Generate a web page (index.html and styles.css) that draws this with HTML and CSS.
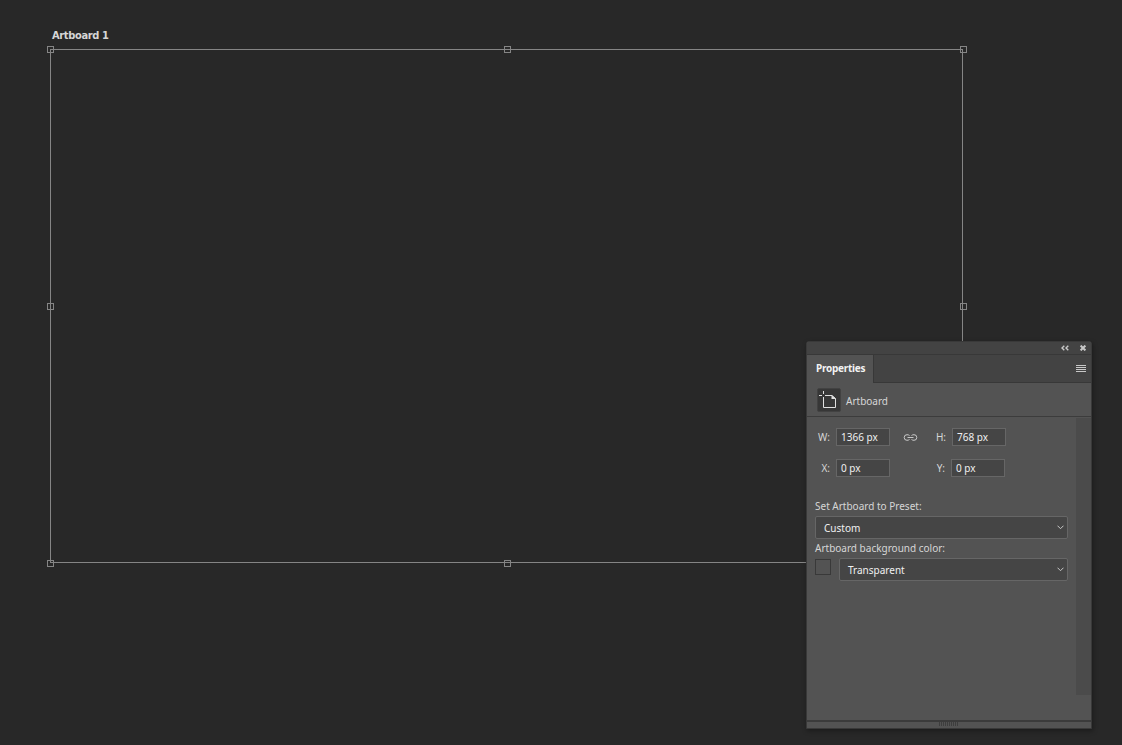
FILE: index.html
```
<!DOCTYPE html>
<html lang="en">
<head>
  <meta charset="utf-8">
  <title>Artboard</title>
  <link rel="stylesheet" href="styles.css">
</head>
<body>
<div class="artboard">
  <div class="artboard-name">Artboard 1</div>
  <span class="handle top left"></span>
  <span class="handle top center"></span>
  <span class="handle top right"></span>
  <span class="handle middle left"></span>
  <span class="handle middle right"></span>
  <span class="handle bottom left"></span>
  <span class="handle bottom center"></span>
</div>

<div class="panel">
  <div class="titlebar">
    <svg class="collapse" width="8" height="6" viewBox="0 0 8 6"><path d="M3.3 .7L1 3l2.3 2.3M7.3 .7L5 3l2.3 2.3"/></svg>
    <svg class="close" width="6" height="6" viewBox="0 0 6 6"><path d="M.6 .6l4.8 4.8M5.4 .6L.6 5.4"/></svg>
  </div>
  <div class="tabs">
    <div class="tab">Properties</div>
    <svg class="menu" width="10" height="7" viewBox="0 0 10 7"><path d="M0 .5h10M0 2.5h10M0 4.5h10M0 6.5h10"/></svg>
  </div>
  <div class="heading">
    <div class="tool">
      <svg width="22" height="22" viewBox="0 0 22 22">
        <path d="M5.500 2v3M1 6.500h3M5.500 8v10.500h12v-9l-3.500 -3H7"/>
        <path class="fold" d="M13.500 6v4h4.500z"/>
      </svg>
    </div>
    <span class="heading-text">Artboard</span>
  </div>
  <div class="content">
    <div class="form">
      <div class="row">
        <label>W:</label><div class="field">1366 px</div>
        <svg class="link" width="15" height="7" viewBox="0 0 15 7"><path d="M6.500 1.500Q5.500 .7 4 .7A2.800 2.800 0 0 0 4 6.300Q5.500 6.300 6.500 5.500M8.500 1.500Q9.500 .7 11 .7A2.800 2.800 0 0 1 11 6.300Q9.500 6.300 8.500 5.500M4.500 3.500h6"/></svg>
        <label class="second">H:</label><div class="field">768 px</div>
      </div>
      <div class="row position">
        <label>X:</label><div class="field">0 px</div>
        <span class="link"></span>
        <label class="second">Y:</label><div class="field">0 px</div>
      </div>
      <div class="caption preset">Set Artboard to Preset:</div>
      <div class="select">
        <span class="custom">Custom</span>
        <svg width="7" height="5" viewBox="0 0 7 5"><path d="M.5 .7l3 3l3 -3"/></svg>
      </div>
      <div class="caption background">Artboard background color:</div>
      <div class="color-row">
        <span class="swatch"></span>
        <div class="select">
          <span class="transparent">Transparent</span>
          <svg width="7" height="5" viewBox="0 0 7 5"><path d="M.5 .7l3 3l3 -3"/></svg>
        </div>
      </div>
    </div>
    <div class="scrollbar"></div>
  </div>
  <div class="resize"><span class="grip"></span></div>
</div>
</body>
</html>
```
FILE: styles.css
```
* { box-sizing: border-box; }
body {
    margin: 0;
    height: 745px;
    overflow: hidden;
    background: #282828;
    color: #d6d6d6;
    font: 10px/14px "Noto Sans", "Open Sans", sans-serif;
}
svg {
    display: block;
    flex: none;
    fill: none;
    stroke: #c8c8c8;
}

/* artboard on the canvas */
.artboard {
    position: absolute;
    left: 50px;
    top: 49px;
    width: 913px;
    height: 514px;
    border: 1px solid #858585;
}
.artboard-name {
    position: absolute;
    left: 1px;
    top: -21px;
    white-space: nowrap;
    font: bold 11px/14px "DejaVu Sans Condensed", "DejaVu Sans", sans-serif;
    letter-spacing: -.35px;
}
.handle {
    position: absolute;
    width: 7px;
    height: 7px;
    border: 1px solid #858585;
}
.top { top: -4px; }
.middle { top: 253px; }
.bottom { top: 510px; }
.left { left: -4px; }
.center { left: 453px; }
.right { left: 909px; }

/* floating panel */
.panel {
    position: absolute;
    left: 806px;
    top: 341px;
    width: 286px;
    height: 388px;
    display: flex;
    flex-direction: column;
    border: 1px solid #393939;
    border-radius: 3px 3px 0 0;
    background: #535353;
    box-shadow: 1px 2px 5px rgba(0,0,0,.35);
}
.titlebar {
    display: flex;
    align-items: center;
    justify-content: flex-end;
    gap: 11px;
    height: 13px;
    padding-right: 5px;
    background: #434343;
    border-bottom: 1px solid #383838;
}
.collapse { stroke-width: 1.400; }
.close { stroke-width: 2; }
.tabs {
    display: flex;
    justify-content: space-between;
    height: 28px;
    padding-right: 5px;
    background: linear-gradient(#383838, #383838) bottom / 100% 1px no-repeat #434343;
}
.tab {
    width: 67px;
    padding: 6px 0 0 9px;
    background: #535353;
    border-right: 1px solid #383838;
    color: #f2f2f2;
    font-weight: bold;
    letter-spacing: -.25px;
}
.menu { margin-top: 10px; }
.heading {
    display: flex;
    height: 34px;
    padding: 5px 0 0 10px;
    border-bottom: 1px solid #3c3c3c;
}
.tool {
    width: 24px;
    height: 24px;
    border: 1px solid #424242;
    border-radius: 2px;
    background: #373737;
}
.tool svg { stroke: #e0e0e0; }
.tool .fold { fill: #e0e0e0; stroke: none; }
.heading-text { margin: 6px 0 0 5px; }
.content {
    display: flex;
    justify-content: space-between;
    height: 303px;
}
.form {
    width: 262px;
    padding: 11px 0 0 8px;
}
.scrollbar {
    width: 15px;
    height: 277px;
    margin-top: 1px;
    background: #4b4b4b;
}
.row {
    display: flex;
    align-items: center;
    height: 18px;
}
.row label {
    width: 15px;
    margin-right: 6px;
    text-align: right;
}
.field {
    width: 54px;
    height: 18px;
    padding: 1px 0 0 4px;
    border: 1px solid #666;
    background: #454545;
    color: #f0f0f0;
}
.row .link {
    width: 15px;
    margin: 0 15px 0 13px;
}
.row .second { width: 13px; }
.position { margin-top: 13px; }
.position .second { width: 12px; }
.preset { margin-top: 22px; }
.caption { height: 14px; }
.select {
    display: flex;
    align-items: center;
    justify-content: space-between;
    width: 253px;
    height: 23px;
    margin-top: 3px;
    padding: 0 3px 0 8px;
    border: 1px solid #666;
    border-radius: 2px;
    background: #454545;
    color: #f0f0f0;
}
.background { margin-top: 2px; }
.color-row { display: flex; }
.color-row .select {
    width: 229px;
    margin-left: 8px;
}
.swatch {
    width: 16px;
    height: 16px;
    margin-top: 4px;
    border: 1px solid #393939;
}
.resize {
    flex: 1;
    padding-left: 132px;
    border-top: 2px solid #3b3b3b;
}
.grip {
    display: block;
    width: 20px;
    height: 4px;
    background: repeating-linear-gradient(90deg, #3e3e3e 0, #3e3e3e 1px, transparent 1px, transparent 2px);
}
```
